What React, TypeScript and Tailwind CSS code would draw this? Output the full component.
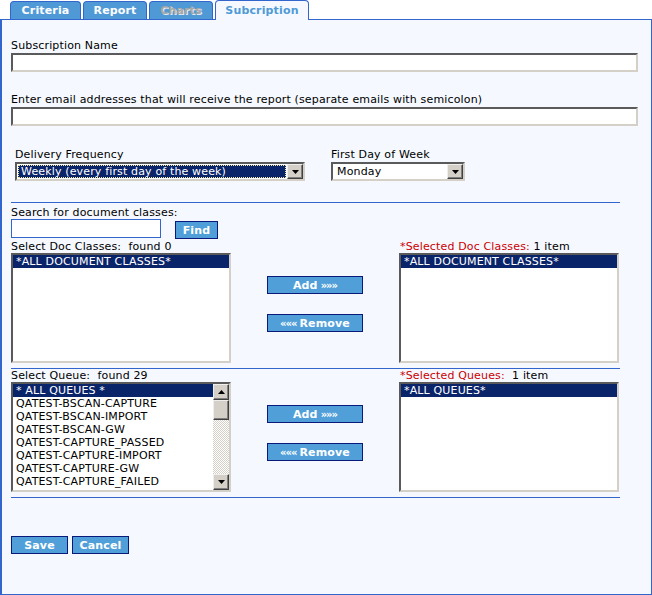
import React from "react";

const sunken =
  "border-2 border-t-[#5a5a5a] border-l-[#5a5a5a] border-r-[#d4d0c8] border-b-[#d4d0c8] bg-white";

function Tab({ label, active, disabled, width }: { label: string; active?: boolean; disabled?: boolean; width: string }) {
  if (active) {
    return (
      <div
        className={`relative z-10 -mb-px flex h-[20px] ${width} items-center justify-center rounded-t-[4px] border border-b-0 border-[#3366cc] bg-[#f5f9ff] font-bold text-[#4f9ad6]`}
      >
        {label}
      </div>
    );
  }
  return (
    <div
      className={`flex h-[18px] ${width} items-center justify-center rounded-t-[4px] border border-b-0 border-[#3366cc] bg-[#4f9ad6] font-bold ${
        disabled ? "text-[#a8a8a8] [text-shadow:1px_1px_0_#e8e8e8]" : "text-white"
      }`}
    >
      {label}
    </div>
  );
}

function Btn({ children, width }: { children: React.ReactNode; width: string }) {
  return (
    <div
      className={`flex h-[18px] ${width} items-center justify-center border border-[#0a1a7a] bg-[#519fd9] font-bold text-white`}
    >
      {children}
    </div>
  );
}

function Arrow({ up }: { up?: boolean }) {
  return (
    <svg width="7" height="4" viewBox="0 0 7 4">
      <path d={up ? "M3.5 0 L7 4 L0 4 Z" : "M0 0 L7 0 L3.5 4 Z"} fill="#000" />
    </svg>
  );
}

function WinButton({ up, className }: { up?: boolean; className?: string }) {
  return (
    <div
      className={`flex items-center justify-center border border-t-[#eeeeee] border-l-[#eeeeee] border-r-[#404040] border-b-[#404040] bg-[#d4d0c8] shadow-[inset_-1px_-1px_0_#808080] ${className ?? ""}`}
    >
      <Arrow up={up} />
    </div>
  );
}

function Select({ value, width, focused }: { value: string; width: string; focused?: boolean }) {
  return (
    <div className={`flex h-[19px] ${width} ${sunken}`}>
      <div
        className={`flex flex-1 items-center px-[2px] ${
          focused ? "m-[1px] border border-dotted border-[#f5e9a0] bg-[#0a246a] text-white" : "pl-[4px]"
        }`}
      >
        {value}
      </div>
      <WinButton className="w-[16px]" />
    </div>
  );
}

function ListBox({ items, scroll }: { items: string[]; scroll?: boolean }) {
  return (
    <div className={`flex h-[110px] w-[220px] ${sunken}`}>
      <div className="flex-1 overflow-hidden">
        {items.map((it, i) => (
          <div
            key={it}
            className={`h-[13px] whitespace-nowrap pl-[3px] leading-[13px] ${i === 0 ? "bg-[#0a246a] text-white" : ""}`}
          >
            {it}
          </div>
        ))}
      </div>
      {scroll && (
        <div className="flex w-[16px] flex-col bg-[repeating-conic-gradient(#d4d0c8_0_25%,#ffffff_0_50%)] bg-[length:2px_2px]">
          <WinButton up className="h-[16px]" />
          <div className="h-[20px] border border-t-[#eeeeee] border-l-[#eeeeee] border-r-[#404040] border-b-[#404040] bg-[#d4d0c8] shadow-[inset_-1px_-1px_0_#808080]" />
          <div className="flex-1" />
          <WinButton className="h-[16px]" />
        </div>
      )}
    </div>
  );
}

function Picker({
  leftLabel,
  rightLabel,
  rightCount,
  leftItems,
  rightItem,
  scroll,
}: {
  leftLabel: string;
  rightLabel: string;
  rightCount: string;
  leftItems: string[];
  rightItem: string;
  scroll?: boolean;
}) {
  return (
    <div className="flex">
      <div className="flex w-[220px] flex-col">
        <div className="h-[13px] whitespace-pre">{leftLabel}</div>
        <ListBox items={leftItems} scroll={scroll} />
      </div>
      <div className="flex w-[168px] flex-col gap-[20px] pl-[36px] pt-[36px]">
        <Btn width="w-[96px]">
          Add <span className="ml-[3px] text-[10px] tracking-[-1px]">»»»</span>
        </Btn>
        <Btn width="w-[96px]">
          <span className="mr-[3px] text-[10px] tracking-[-1px]">«««</span> Remove
        </Btn>
      </div>
      <div className="flex w-[220px] flex-col">
        <div className="h-[13px] whitespace-pre pl-[1px]">
          <span className="text-[#cc0000]">{rightLabel}</span>
          {rightCount}
        </div>
        <ListBox items={[rightItem]} />
      </div>
    </div>
  );
}

export default function App() {
  return (
    <div className="flex h-[595px] w-[652px] flex-col bg-white font-['DejaVu_Sans',sans-serif] text-[11px] leading-[13px] tracking-[0.15px] text-black">
      <div className="flex h-[19px] items-end gap-[2px] pl-[10px]">
        <Tab label="Criteria" width="w-[71px]" />
        <Tab label="Report" width="w-[64px]" />
        <Tab label="Charts" width="w-[64px]" disabled />
        <Tab label="Subcription" width="w-[94px]" active />
      </div>
      <div className="flex flex-1 flex-col border border-l-2 border-[#3366cc] bg-[#f5f9ff] pl-[9px] pt-[19px]">
        <div className="h-[13px]">Subscription Name</div>
        <div className={`mt-[1px] h-[19px] w-[627px] ${sunken}`} />

        <div className="mt-[21px] h-[13px]">
          Enter email addresses that will receive the report (separate emails with semicolon)
        </div>
        <div className={`mt-[1px] h-[19px] w-[627px] ${sunken}`} />

        <div className="mt-[22px] flex pl-[4px]">
          <div className="flex w-[316px] flex-col gap-[1px]">
            <div className="h-[13px]">Delivery Frequency</div>
            <Select value="Weekly (every first day of the week)" width="w-[290px]" focused />
          </div>
          <div className="flex flex-col gap-[1px]">
            <div className="h-[13px]">First Day of Week</div>
            <Select value="Monday" width="w-[134px]" />
          </div>
        </div>

        <div className="mt-[21px] h-px w-[609px] bg-[#3366cc]" />

        <div className="mt-[3px] h-[13px]">Search for document classes:</div>
        <div className="flex items-start gap-[14px]">
          <div className="h-[19px] w-[150px] border border-[#3366cc] bg-white" />
          <div className="mt-[2px]">
            <Btn width="w-[43px]">Find</Btn>
          </div>
        </div>

        <div className="mt-[1px]">
          <Picker
            leftLabel="Select Doc Classes:  found 0"
            rightLabel="*Selected Doc Classes:"
            rightCount=" 1 item"
            leftItems={["*ALL DOCUMENT CLASSES*"]}
            rightItem="*ALL DOCUMENT CLASSES*"
          />
        </div>

        <div className="mt-[5px] h-px w-[609px] bg-[#3366cc]" />

        <Picker
          leftLabel="Select Queue:  found 29"
          rightLabel="*Selected Queues:"
          rightCount="  1 item"
          leftItems={[
            "* ALL QUEUES *",
            "QATEST-BSCAN-CAPTURE",
            "QATEST-BSCAN-IMPORT",
            "QATEST-BSCAN-GW",
            "QATEST-CAPTURE_PASSED",
            "QATEST-CAPTURE-IMPORT",
            "QATEST-CAPTURE-GW",
            "QATEST-CAPTURE_FAILED",
          ]}
          rightItem="*ALL QUEUES*"
          scroll
        />

        <div className="mt-[5px] h-px w-[609px] bg-[#3366cc]" />

        <div className="mt-[38px] flex gap-[4px]">
          <Btn width="w-[57px]">Save</Btn>
          <Btn width="w-[57px]">Cancel</Btn>
        </div>
      </div>
    </div>
  );
}
